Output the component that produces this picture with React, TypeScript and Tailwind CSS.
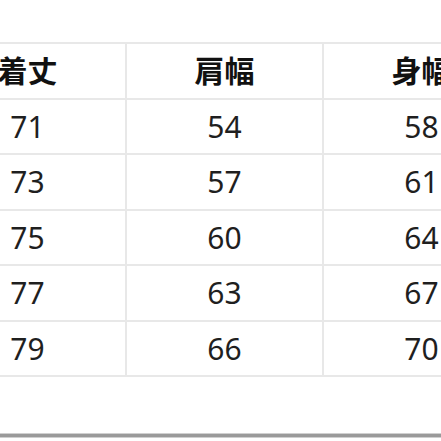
const headers = ["着丈", "肩幅", "身幅"];

const rows = [
  ["71", "54", "58"],
  ["73", "57", "61"],
  ["75", "60", "64"],
  ["77", "63", "67"],
  ["79", "66", "70"],
];

function Cell({ children, head }: { children: React.ReactNode; head?: boolean }) {
  return (
    <div
      className={`flex h-[55.5px] w-[197px] shrink-0 items-center justify-center border-r-2 border-b-2 border-[#e8e8e8] ${
        head ? "text-[30px] font-bold text-[#111]" : "text-[30px] font-normal text-[#1f1f1f]"
      }`}
    >
      {children}
    </div>
  );
}

export default function App() {
  return (
    <div
      className="h-[441px] w-[441px] overflow-hidden bg-white"
      style={{ fontFamily: '"Noto Sans", "Noto Sans CJK JP", sans-serif' }}
    >
      <div className="h-[42px]" />
      <div className="ml-[-70px] w-[600px] border-t-2 border-[#e8e8e8]">
        <div className="flex">
          {headers.map((h) => (
            <Cell key={h} head>
              {h}
            </Cell>
          ))}
        </div>
        {rows.map((r, i) => (
          <div key={i} className="flex">
            {r.map((v, j) => (
              <Cell key={j}>{v}</Cell>
            ))}
          </div>
        ))}
      </div>
      <div className="h-[56px]" />
      <div className="h-px bg-[#d0d0d0]" />
      <div className="h-[3px] bg-[#9a9a9a]" />
      <div className="h-px bg-[#cfcfcf]" />
    </div>
  );
}
